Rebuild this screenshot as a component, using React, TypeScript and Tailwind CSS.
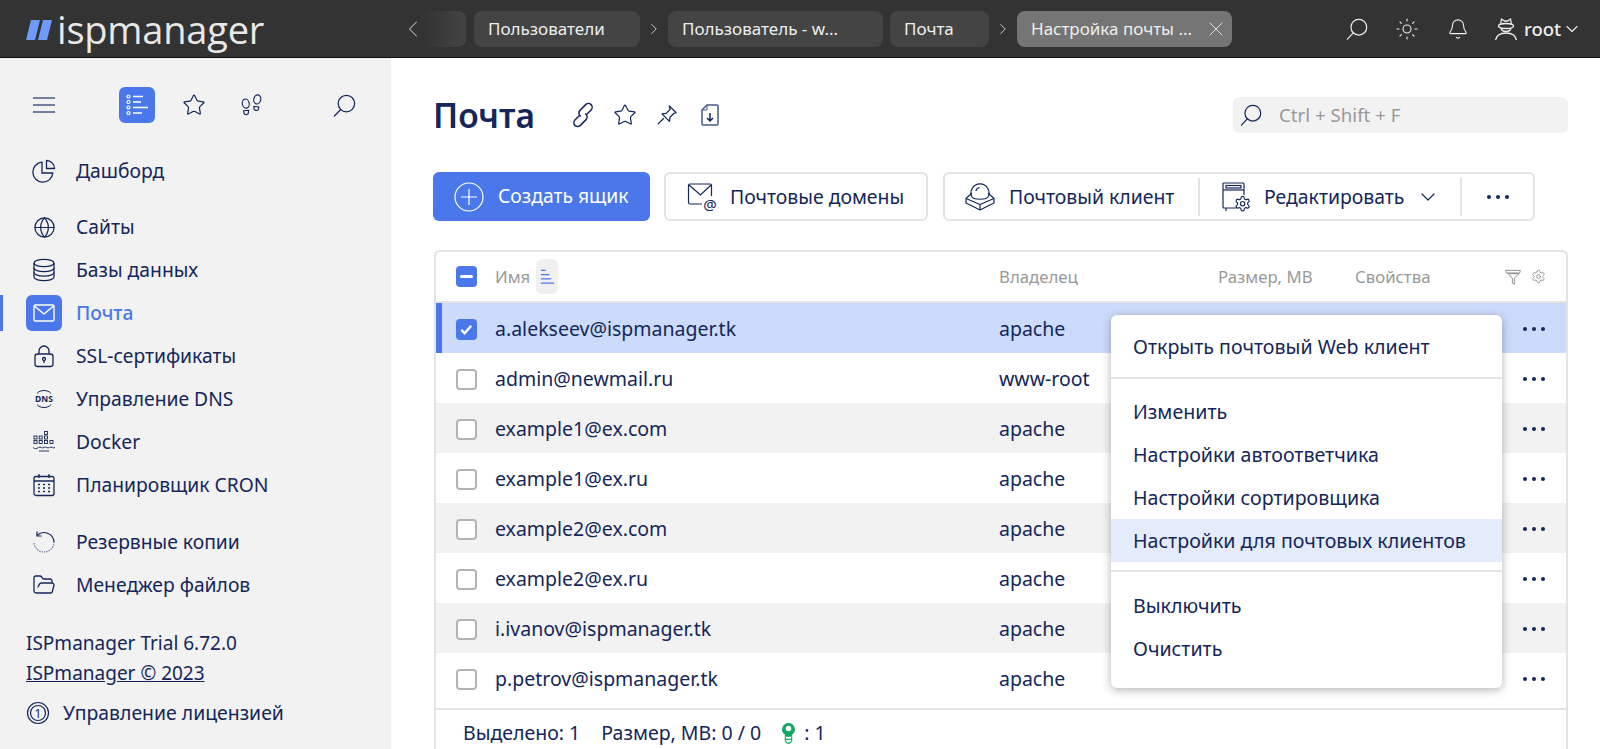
import { Bell, ChevronDown, ChevronLeft, ChevronRight, FolderOpen, Globe, Settings, Star, Sun, X } from "lucide-react";

const navy = "#14265a";

function SearchIcon({ className = "" }: { className?: string }) {
  return (
    <svg viewBox="0 0 24 24" fill="none" stroke="currentColor" strokeWidth="1.3" className={className}>
      <circle cx="14" cy="10" r="8.6" />
      <path d="M8 16.2 1.5 23" strokeLinecap="round" />
    </svg>
  );
}

function Dots() {
  return (
    <div className="flex gap-[5px]">
      <span className="w-1 h-1 rounded-full bg-[#14265a]" />
      <span className="w-1 h-1 rounded-full bg-[#14265a]" />
      <span className="w-1 h-1 rounded-full bg-[#14265a]" />
    </div>
  );
}

function ListIcon() {
  return (
    <svg viewBox="0 0 24 24" fill="none" stroke="white" strokeWidth="1.2" className="w-6 h-6">
      <circle cx="3.500" cy="3.500" r="1.500" />
      <circle cx="3.500" cy="9" r="1.500" />
      <circle cx="3.500" cy="14.500" r="1.500" />
      <circle cx="3.500" cy="20" r="1.500" />
      <path d="M8 3.500H18M8 9H16M8 14.500H23M8 20H17" strokeWidth="1.600" />
    </svg>
  );
}

function FootIcon() {
  return (
    <svg viewBox="0 0 24 24" fill="none" stroke={navy} strokeWidth="1.2" className="w-[23px] h-[23px]">
      <ellipse cx="6" cy="10" rx="3.6" ry="4.8" transform="rotate(-12 6 10)" />
      <path d="M3.8 17.5 9 17l-.4 3.4c-.6 1.4-3.8 1.4-4.4 0z" />
      <ellipse cx="18" cy="5.6" rx="3.6" ry="4.8" transform="rotate(12 18 5.6)" />
      <path d="M14.5 13l5.2.5-.6 2.8c-.8 1.4-3.8 1-4.4-.4z" />
    </svg>
  );
}

function PieIcon() {
  return (
    <svg viewBox="0 0 24 24" fill="none" stroke={navy} strokeWidth="1.3" className="w-[24px] h-[24px]">
      <path d="M10 3.2a10 10 0 1 0 10.8 10.8H10z" />
      <path d="M14.5 1.5a8 8 0 0 1 8 8h-8z" />
    </svg>
  );
}

function DbIcon() {
  return (
    <svg viewBox="0 0 24 24" fill="none" stroke={navy} strokeWidth="1.3" className="w-[24px] h-[24px]">
      <ellipse cx="12" cy="5" rx="10" ry="3.6" />
      <path d="M2 5v14c0 2 4.5 3.6 10 3.6S22 21 22 19V5" />
      <path d="M2 10c0 2 4.5 3.6 10 3.6S22 12 22 10M2 14.500c0 2 4.500 3.600 10 3.600s10-1.600 10-3.600" />
    </svg>
  );
}

function MailIcon() {
  return (
    <svg viewBox="0 0 24 24" fill="none" stroke="white" strokeWidth="1.4" className="w-6 h-6">
      <rect x="2" y="4" width="20" height="16" rx="1.5" />
      <path d="m2.500 5 9.500 8 9.500-8" />
    </svg>
  );
}

function LockIcon() {
  return (
    <svg viewBox="0 0 24 24" fill="none" stroke={navy} strokeWidth="1.3" className="w-[24px] h-[24px]">
      <rect x="3" y="10" width="18" height="12.500" rx="2.500" />
      <path d="M7 10V7a5 5 0 0 1 10 0v3" />
      <circle cx="12" cy="15" r="1.500" />
      <path d="M12 16.500v2.500" />
    </svg>
  );
}

function DnsIcon() {
  return (
    <svg viewBox="0 0 24 24" fill="none" stroke={navy} strokeWidth="1" className="w-[24px] h-[24px]">
      <path d="M5 6.500C8 2.500 16 2.500 19 6.500M5 17.500c3 4 11 4 14 0" />
      <text x="12" y="15" textAnchor="middle" fontSize="8.500" fontWeight="700" fill={navy} stroke="none" fontFamily="Noto Sans, sans-serif">DNS</text>
    </svg>
  );
}

function DockerIcon() {
  return (
    <svg viewBox="0 0 24 24" fill="none" stroke={navy} strokeWidth="0.9" className="w-[24px] h-[24px]">
      <rect x="12.500" y="1.500" width="3" height="3" />
      <rect x="2" y="6" width="3" height="3" /><rect x="7.200" y="6" width="3" height="3" /><rect x="12.500" y="6" width="3" height="3" />
      <rect x="2" y="10.500" width="3" height="3" /><rect x="7.200" y="10.500" width="3" height="3" /><rect x="12.500" y="10.500" width="3" height="3" /><rect x="18" y="10.500" width="3" height="3" />
      <path d="M1 17.500c2 1.500 3.500 1.500 5.500 0s3.500 1.500 5.500 0 3.500 1.500 5.500 0 3.500 1.500 5.500 0M7 21h10" />
    </svg>
  );
}

function CalendarIcon() {
  return (
    <svg viewBox="0 0 24 24" fill="none" stroke={navy} strokeWidth="1.3" className="w-[24px] h-[24px]">
      <rect x="2" y="3.500" width="20" height="19" rx="2" />
      <path d="M2 8h20M7 1v4M17 1v4" />
      <path d="M6 11.500h2M11 11.500h2M16 11.500h2M6 15h2M11 15h2M16 15h2M6 18.500h2M11 18.500h2M16 18.500h2" strokeWidth="1.700" />
    </svg>
  );
}

function BackupIcon() {
  return (
    <svg viewBox="0 0 24 24" fill="none" stroke={navy} strokeWidth="1.2" className="w-[24px] h-[24px]">
      <path d="M5 5.500A10 10 0 0 1 22 12" />
      <path d="M22 12a10 10 0 0 1-20 0" strokeDasharray="1.200 1.200" stroke="#5a6a92" />
      <path d="M5 1.500v4.500h4.500" />
    </svg>
  );
}

function LicenseIcon() {
  return (
    <svg viewBox="0 0 24 24" fill="none" stroke={navy} strokeWidth="1.200" className="w-[24px] h-[24px]">
      <circle cx="12" cy="12" r="10.500" />
      <circle cx="12" cy="12" r="7.500" />
      <text x="12" y="16.500" textAnchor="middle" fontSize="12" fill={navy} stroke="none" fontFamily="Noto Sans, sans-serif">1</text>
    </svg>
  );
}

function LinkIcon() {
  return (
    <svg viewBox="0 0 24 24" fill="none" stroke={navy} strokeWidth="1.400" className="w-[26px] h-[26px] overflow-visible">
      <g transform="rotate(-45 12 12)">
        <path d="M9 10H3.500a3.500 3.500 0 0 0 0 7H11a3.500 3.500 0 0 0 3.300-4.500" />
        <path d="M15 14h5.500a3.500 3.500 0 0 0 0-7H13a3.500 3.500 0 0 0-3.300 4.500" />
      </g>
    </svg>
  );
}

function PinIcon() {
  return (
    <svg viewBox="0 0 24 24" fill="none" stroke={navy} strokeWidth="1.400" strokeLinejoin="round" className="w-[22px] h-[22px]">
      <path d="m14.500 2 7.500 7.500-2.400.6-4.300 4.300-.6 4.600-8.200-8.200 4.600-.6 4.300-4.300z" />
      <path d="M8.500 15.500 2 22" />
    </svg>
  );
}

function FileDownIcon() {
  return (
    <svg viewBox="0 0 18 22" fill="none" stroke="#4a5a86" strokeWidth="1.500" className="w-[18px] h-[22px]">
      <path d="M6 1h10a1 1 0 0 1 1 1v18a1 1 0 0 1-1 1H2a1 1 0 0 1-1-1V6z" />
      <path d="M6 1v5H1" strokeWidth="1" />
      <path d="M9 9v8M6 14l3 3 3-3" stroke={navy} />
    </svg>
  );
}

function MailAtIcon() {
  return (
    <svg viewBox="0 0 32 32" fill="none" stroke={navy} strokeWidth="1.200" className="w-[32px] h-[32px]">
      <path d="M15 23H3a1.500 1.500 0 0 1-1.500-1.500v-17A1.500 1.500 0 0 1 3 3h20a1.500 1.500 0 0 1 1.500 1.500V15" />
      <path d="m2 4 11.500 10L24 4" />
      <text x="23" y="29" textAnchor="middle" fontSize="15" fill={navy} stroke="none" fontFamily="Noto Sans, sans-serif">@</text>
    </svg>
  );
}

function ClientIcon() {
  return (
    <svg viewBox="0 0 30 28" fill="none" stroke={navy} strokeWidth="1.200" strokeLinejoin="round" className="w-[30px] h-[28px]">
      <path d="M7 14a9 9 0 1 1 16 0" />
      <path d="M7 10 1 15.500V20l14 7 14-7v-4.500L23 10" />
      <path d="m1 15.500 14 6 14-6M15 21.500V27" />
      <path d="M7 14c2 3 14 3 16 0" />
      <path d="M11 8c.3-2 1.500-3.200 3.500-3.500" />
    </svg>
  );
}

function EditIcon() {
  return (
    <svg viewBox="0 0 32 32" fill="none" stroke={navy} strokeWidth="1.200" className="w-[32px] h-[32px]">
      <path d="M15 27H3a1 1 0 0 1-1-1V3a1 1 0 0 1 1-1h19a1 1 0 0 1 1 1v11" />
      <path d="M2 9h21" />
      <rect x="5" y="4.500" width="15" height="2.500" />
      <path d="M5 27v3" />
      <g transform="translate(13 14) scale(0.72)">
        <path d="M12.220 2h-.44a2 2 0 0 0-2 2v.180a2 2 0 0 1-1 1.730l-.430.250a2 2 0 0 1-2 0l-.150-.080a2 2 0 0 0-2.730.730l-.220.380a2 2 0 0 0 .730 2.730l.150.100a2 2 0 0 1 1 1.720v.510a2 2 0 0 1-1 1.740l-.150.090a2 2 0 0 0-.730 2.730l.220.380a2 2 0 0 0 2.730.730l.150-.080a2 2 0 0 1 2 0l.430.250a2 2 0 0 1 1 1.730V20a2 2 0 0 0 2 2h.440a2 2 0 0 0 2-2v-.180a2 2 0 0 1 1-1.730l.430-.250a2 2 0 0 1 2 0l.150.080a2 2 0 0 0 2.730-.730l.220-.390a2 2 0 0 0-.730-2.730l-.150-.080a2 2 0 0 1-1-1.740v-.500a2 2 0 0 1 1-1.740l.150-.090a2 2 0 0 0 .730-2.730l-.220-.380a2 2 0 0 0-2.730-.730l-.150.080a2 2 0 0 1-2 0l-.430-.250a2 2 0 0 1-1-1.730V4a2 2 0 0 0-2-2z" strokeWidth="1.600" />
        <circle cx="12" cy="12" r="3" strokeWidth="1.600" />
      </g>
    </svg>
  );
}

function UserIcon() {
  return (
    <svg viewBox="0 0 24 24" fill="none" stroke="#eeeeee" strokeWidth="1.300" className="w-[24px] h-[24px]">
      <path d="M1.500 23c1-5 5-7 10.500-7s9.500 2 10.500 7" />
      <path d="M6.500 8 7.500 2l3 2h3l3-2 1 6" />
      <ellipse cx="12" cy="9" rx="7.500" ry="2.500" />
      <path d="M7 11c.5 2.500 2.500 3.500 5 3.500s4.500-1 5-3.500" />
    </svg>
  );
}

function FilterIcon() {
  return (
    <svg viewBox="0 0 24 24" fill="none" stroke="#8d8d8d" strokeWidth="1.500" className="w-[16px] h-[16px]">
      <path d="M1 2h22l-1 4H2zM5 7h16l-7 7v9l-3-2v-7z" />
    </svg>
  );
}

function SortIcon() {
  return (
    <svg viewBox="0 0 16 16" fill="none" stroke="#4a78ea" strokeWidth="1.300" className="w-[15px] h-[15px]">
      <path d="M1 1.500h5M1 6h9M1 10.500h11M1 15h14" />
    </svg>
  );
}

function BulbIcon() {
  return (
    <svg viewBox="0 0 16 24" className="w-[15px] h-[22px]" fill="none">
      <path d="M8 1a7 7 0 0 0-4 12.700V16h8v-2.300A7 7 0 0 0 8 1z" fill="#16a765" />
      <circle cx="8" cy="7" r="3" fill="white" />
      <path d="M8 10v6M4.500 16v4.500l2 2.500h3l2-2.500V16M4.500 19h7" stroke="#16a765" strokeWidth="1.200" />
    </svg>
  );
}

const nav = [
  { label: "Сайты", icon: <Globe size={23} strokeWidth={1.3} color={navy} /> },
  { label: "Базы данных", icon: <DbIcon /> },
  { label: "Почта", icon: <MailIcon />, active: true },
  { label: "SSL-сертификаты", icon: <LockIcon /> },
  { label: "Управление DNS", icon: <DnsIcon /> },
  { label: "Docker", icon: <DockerIcon /> },
  { label: "Планировщик CRON", icon: <CalendarIcon /> },
];

const nav2 = [
  { label: "Резервные копии", icon: <BackupIcon /> },
  { label: "Менеджер файлов", icon: <FolderOpen size={24} strokeWidth={1.3} color={navy} /> },
];

const rows = [
  { name: "a.alekseev@ispmanager.tk", owner: "apache", sel: true },
  { name: "admin@newmail.ru", owner: "www-root" },
  { name: "example1@ex.com", owner: "apache", alt: true },
  { name: "example1@ex.ru", owner: "apache" },
  { name: "example2@ex.com", owner: "apache", alt: true },
  { name: "example2@ex.ru", owner: "apache" },
  { name: "i.ivanov@ispmanager.tk", owner: "apache", alt: true },
  { name: "p.petrov@ispmanager.tk", owner: "apache", last: true },
];

function NavItem({ label, icon, active }: { label: string; icon: React.ReactNode; active?: boolean }) {
  return (
    <div className={`flex items-center h-9 pl-[23px] border-l-[3px] ${active ? "border-[#4a78ea]" : "border-transparent"}`}>
      <div className={`w-9 h-9 flex items-center justify-center rounded-md ${active ? "bg-[#4a78ea]" : ""}`}>{icon}</div>
      <span className={`ml-[14px] text-[19.3px] ${active ? "text-[#4a78ea] font-medium" : ""}`}>{label}</span>
    </div>
  );
}

export default function App() {
  return (
    <div className="h-[749px] flex flex-col overflow-hidden bg-white text-[#14265a] font-['Noto_Sans',sans-serif]">
      {/* Top bar */}
      <header className="h-[58px] shrink-0 flex items-center bg-[#333333] border-b border-[#111111] text-[#eeeeee]">
        <div className="w-[405px] shrink-0 flex items-center pl-[26px]">
          <svg viewBox="0 0 26 20" className="w-[26px] h-[20px] mt-[3px]">
            <path d="M5 0h9L9 20H0zM17 0h9l-5 20h-9z" fill="#6e9bfb" />
          </svg>
          <span className="ml-[5px] text-[38px] leading-none font-medium tracking-[-0.2px] text-[#e8e8e8] font-['Open_Sans',sans-serif]">ispmanager</span>
        </div>
        <div className="flex items-center h-9 text-[17px]">
          <ChevronLeft size={28} strokeWidth={0.9} className="text-[#bbbbbb] -ml-[6px] -mr-[6px]" />
          <div className="w-[45px] h-9 rounded-r-lg bg-gradient-to-r from-[#333333] to-[#444444]" />
          <div className="ml-2 w-[166px] h-9 flex items-center px-[14px] rounded-lg bg-[#444444]">Пользователи</div>
          <div className="w-7 flex justify-center"><ChevronRight size={18} strokeWidth={1.1} /></div>
          <div className="w-[215px] h-9 flex items-center px-[14px] rounded-lg bg-[#444444]">Пользователь - w...</div>
          <div className="ml-[7px] w-[99px] h-9 flex items-center px-[14px] rounded-lg bg-[#444444]">Почта</div>
          <div className="w-7 flex justify-center"><ChevronRight size={18} strokeWidth={1.1} /></div>
          <div className="w-[215px] h-9 flex items-center justify-between pl-[14px] pr-1 rounded-lg bg-[#757575] whitespace-nowrap">
            <span>Настройка почты ...</span>
            <X size={24} strokeWidth={0.9} />
          </div>
        </div>
        <div className="flex items-center ml-[114px]">
          <SearchIcon className="w-[22px] h-[22px]" />
          <Sun size={24} strokeWidth={1.1} className="ml-[27px]" />
          <Bell size={22} strokeWidth={1.2} className="ml-[28px]" />
          <div className="ml-[25px]"><UserIcon /></div>
          <span className="ml-[6px] text-[18.500px] font-medium">root</span>
          <ChevronDown size={20} strokeWidth={1.3} className="ml-[1px]" />
        </div>
      </header>

      <div className="flex flex-1 min-h-0">
        {/* Sidebar */}
        <aside className="w-[391px] shrink-0 bg-[#f2f2f2]">
          <div className="flex items-center h-9 mt-[29px] pl-[33px]">
            <svg viewBox="0 0 22 18" fill="none" stroke="#4a5a86" strokeWidth="1.300" className="w-[22px] h-[18px]">
              <path d="M0 2h22M0 9h22M0 16h22" />
            </svg>
            <div className="ml-[64px] w-9 h-9 rounded-md bg-[#4a78ea] flex items-center justify-center"><ListIcon /></div>
            <Star size={24} strokeWidth={1.2} color={navy} className="ml-[27px]" />
            <div className="ml-[34px]"><FootIcon /></div>
            <SearchIcon className="ml-[70px] w-[23px] h-[23px]" />
          </div>
          <div className="mt-[30px]">
            <NavItem label="Дашборд" icon={<PieIcon />} />
          </div>
          <div className="mt-5 flex flex-col gap-[7px]">
            {nav.map((n) => <NavItem key={n.label} {...n} />)}
          </div>
          <div className="mt-[21px] flex flex-col gap-[7px]">
            {nav2.map((n) => <NavItem key={n.label} {...n} />)}
          </div>
          <div className="mt-[25px] pl-[26px] text-[19px] leading-[30px]">
            <div>ISPmanager Trial 6.72.0</div>
            <div className="underline">ISPmanager © 2023</div>
          </div>
          <div className="mt-[7px] pl-[26px] h-9 flex items-center text-[19.400px]">
            <LicenseIcon />
            <span className="ml-[13px]">Управление лицензией</span>
          </div>
        </aside>

        {/* Content */}
        <main className="flex-1 min-w-0 pl-[42px] pr-[32px]">
          <div className="flex items-center h-9 mt-[39px]">
            <h1 className="pt-[2px] text-[33.500px] font-semibold leading-none">Почта</h1>
            <div className="ml-[35px]"><LinkIcon /></div>
            <Star size={24} strokeWidth={1.2} className="ml-[17px]" />
            <div className="ml-[19px]"><PinIcon /></div>
            <div className="ml-[23px]"><FileDownIcon /></div>
            <div className="ml-auto w-[335px] h-9 flex items-center rounded-md bg-[#f2f2f2] pl-[7px] text-[18.700px] text-[#999999]">
              <SearchIcon className="w-[22px] h-[22px] text-[#14265a]" />
              <span className="ml-[17px]">Ctrl + Shift + F</span>
            </div>
          </div>

          <div className="flex mt-[39px] h-[49px]">
            <button className="w-[217px] flex items-center rounded-md bg-[#4a78ea] text-white text-[19.300px] pl-[21px]">
              <svg viewBox="0 0 30 30" fill="none" stroke="white" strokeWidth="1.200" className="w-[30px] h-[30px]">
                <circle cx="15" cy="15" r="14" />
                <path d="M15 7v16M7 15h16" />
              </svg>
              <span className="ml-[14px]">Создать ящик</span>
            </button>
            <button className="ml-[14px] w-[264px] flex items-center rounded-md border-2 border-[#e3e3e3] text-[19.400px] pl-[21px]">
              <MailAtIcon />
              <span className="ml-[11px]">Почтовые домены</span>
            </button>
            <div className="ml-[15px] w-[592px] flex items-center rounded-md border-2 border-[#e3e3e3] text-[19.400px]">
              <div className="w-[255px] h-[38px] flex items-center pl-[20px] border-r-2 border-[#e3e3e3]">
                <ClientIcon />
                <span className="ml-[14px]">Почтовый клиент</span>
              </div>
              <div className="w-[262px] h-[38px] flex items-center pl-[21px] border-r-2 border-[#e3e3e3]">
                <EditIcon />
                <span className="ml-[11px]">Редактировать</span>
                <ChevronDown size={24} strokeWidth={1.2} className="ml-[12px]" />
              </div>
              <div className="flex-1 flex justify-center"><Dots /></div>
            </div>
          </div>

          {/* Table */}
          <div className="relative mt-[29px] ml-[1px] rounded-t-md border-2 border-b-0 border-[#e3e3e3] w-[1134px]">
            <div className="h-[51px] flex items-center pl-[20px] pr-[20px] border-b-2 border-[#e3e3e3] text-[16.800px] text-[#999999]">
              <div className="w-[21px] h-[21px] shrink-0 rounded bg-[#4a78ea] flex items-center justify-center">
                <span className="w-[13px] h-[3px] rounded-sm bg-white" />
              </div>
              <div className="ml-[18px] w-[504px] flex items-center">
                <span>Имя</span>
                <div className="ml-[6px] w-[22px] h-[35px] rounded-md bg-[#f0f0f0] flex items-center justify-center"><SortIcon /></div>
              </div>
              <span className="w-[219px]">Владелец</span>
              <span className="w-[137px]">Размер, МВ</span>
              <span>Свойства</span>
              <div className="ml-auto flex items-center gap-[10px]">
                <FilterIcon />
                <Settings size={15} strokeWidth={1.4} color="#8d8d8d" />
              </div>
            </div>
            {rows.map((r) => (
              <div
                key={r.name}
                className={`flex items-center pr-[21px] text-[19.500px] ${r.sel ? "pl-[14px] bg-[#ccdbfb] border-l-[6px] border-[#4a78ea]" : "pl-[20px]"} ${r.alt ? "bg-[#f2f2f2]" : ""} ${r.last ? "h-[57px] pb-[3px] border-b-2 border-[#e3e3e3]" : "h-[50px] pt-[2px]"}`}
              >
                <div className={`w-[21px] h-[21px] shrink-0 rounded flex items-center justify-center ${r.sel ? "bg-[#4a78ea]" : "bg-white border-2 border-[#b3b3b3]"}`}>
                  {r.sel && (
                    <svg viewBox="0 0 16 16" fill="none" stroke="white" strokeWidth="2.600" className="w-[15px] h-[15px]">
                      <path d="m2.500 8.500 3.500 3.500 7-8" />
                    </svg>
                  )}
                </div>
                <span className="ml-[18px] w-[504px]">{r.name}</span>
                <span>{r.owner}</span>
                <div className="ml-auto"><Dots /></div>
              </div>
            ))}
            <div className="flex items-center h-[46px] pl-[27px] text-[19.500px]">
              <span>Выделено: 1</span>
              <span className="ml-[21px]">Размер, МВ: 0 / 0</span>
              <div className="ml-[20px]"><BulbIcon /></div>
              <span className="ml-[8px]">: 1</span>
            </div>

            {/* Row context menu */}
            <div className="absolute left-[675px] top-[63px] w-[391px] h-[373px] rounded-md bg-white shadow-[0_2px_10px_rgba(0,0,0,0.3)] text-[19.600px]">
              <div className="h-[64px] flex items-center pl-[22px] pt-[1px] border-b-2 border-[#e3e3e3]">Открыть почтовый Web клиент</div>
              <div className="pt-[11px] h-[193px] border-b-2 border-[#e3e3e3]">
                <div className="h-[43px] flex items-center pl-[22px]">Изменить</div>
                <div className="h-[43px] flex items-center pl-[22px]">Настройки автоответчика</div>
                <div className="h-[43px] flex items-center pl-[22px]">Настройки сортировщика</div>
                <div className="h-[43px] flex items-center pl-[22px] bg-[#e4ecfc]">Настройки для почтовых клиентов</div>
              </div>
              <div className="pt-[12px]">
                <div className="h-[43px] flex items-center pl-[22px]">Выключить</div>
                <div className="h-[43px] flex items-center pl-[22px]">Очистить</div>
              </div>
            </div>
          </div>
        </main>
      </div>
    </div>
  );
}
